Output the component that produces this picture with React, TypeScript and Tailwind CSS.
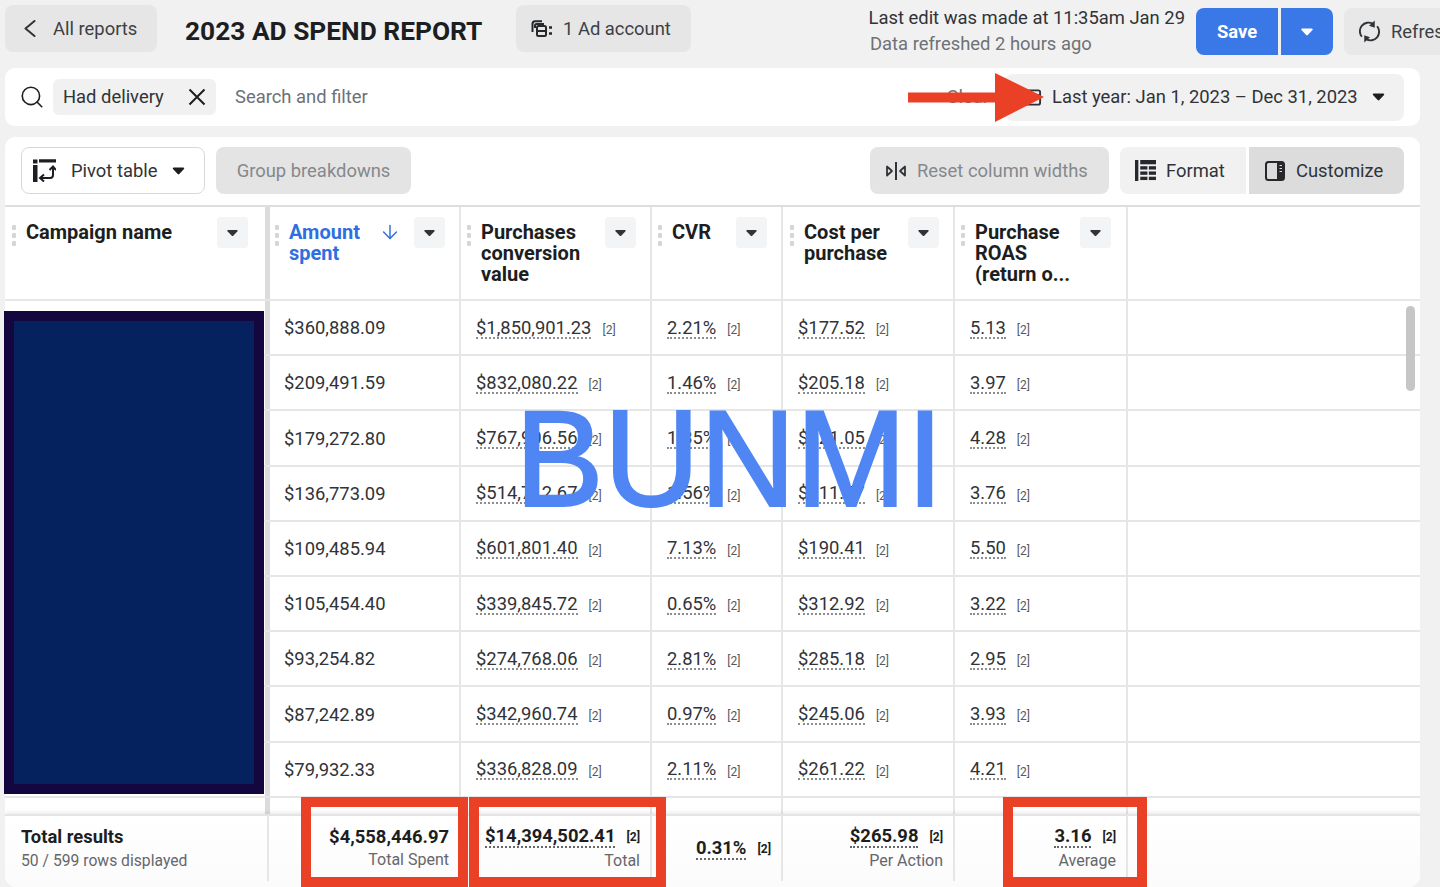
import React from "react";
import { Search, ArrowDown } from "lucide-react";

const cols = "grid grid-cols-[265px_191px_191px_131px_172px_173px_1fr]";

const rows = [
  ["$360,888.09", "$1,850,901.23", "2.21%", "$177.52", "5.13"],
  ["$209,491.59", "$832,080.22", "1.46%", "$205.18", "3.97"],
  ["$179,272.80", "$767,906.56", "1.35%", "$221.05", "4.28"],
  ["$136,773.09", "$514,712.67", "1.56%", "$211.77", "3.76"],
  ["$109,485.94", "$601,801.40", "7.13%", "$190.41", "5.50"],
  ["$105,454.40", "$339,845.72", "0.65%", "$312.92", "3.22"],
  ["$93,254.82", "$274,768.06", "2.81%", "$285.18", "2.95"],
  ["$87,242.89", "$342,960.74", "0.97%", "$245.06", "3.93"],
  ["$79,932.33", "$336,828.09", "2.11%", "$261.22", "4.21"],
];

function Caret({ className = "" }: { className?: string }) {
  return (
    <svg viewBox="0 0 12 8" className={className} fill="currentColor">
      <path d="M1.2 0.6h9.6c.8 0 1.2.9.7 1.5L6.8 7c-.4.5-1.2.5-1.6 0L.5 2.1C0 1.5.4.6 1.2.6z" />
    </svg>
  );
}

function Dots() {
  return (
    <div className="flex flex-col gap-[3px] pt-[3px] w-[4px] shrink-0">
      <span className="w-[4px] h-[5px] rounded-[1px] bg-[#d4d6d9]" />
      <span className="w-[4px] h-[5px] rounded-[1px] bg-[#d4d6d9]" />
      <span className="w-[4px] h-[5px] rounded-[1px] bg-[#d4d6d9]" />
    </div>
  );
}

function HeaderCell({
  lines,
  blue,
  menuAt,
  pad,
  thick,
}: {
  lines: string[];
  blue?: boolean;
  menuAt: string;
  pad: string;
  thick?: boolean;
}) {
  return (
    <div
      className={`relative flex h-full pt-[15px] ${pad} ${thick ? "border-r-[5px] border-r-[#dcdcdc]" : "border-r-2 border-r-[#e6e6e6]"}`}
    >
      <Dots />
      <div
        className={`ml-[10px] text-[20px] leading-[21px] font-bold ${blue ? "text-[#2f6fe0]" : "text-[#1c1e21]"}`}
      >
        {lines.map((l) => (
          <div key={l} className="whitespace-nowrap">
            {l}
          </div>
        ))}
      </div>
      {blue && <ArrowDown className="absolute left-[109px] top-[14px] w-[22px] h-[22px] text-[#2f6fe0]" strokeWidth={1.6} />}
      <div className={`absolute top-[10px] ${menuAt} w-[31px] h-[31px] rounded-[4px] bg-[#f3f4f5] flex items-center justify-center`}>
        <Caret className="w-[11px] h-[8px] text-[#303338]" />
      </div>
    </div>
  );
}

function Val({ v }: { v: string }) {
  return (
    <div className="flex items-center pl-[15px] pt-[1px] h-full border-r-2 border-r-[#e6e6e6]">
      <span className="text-[18.4px] leading-[19px] text-[#303338] border-b-2 border-dotted border-[#8a8d91]">{v}</span>
      <span className="ml-[11px] text-[12px] text-[#55585d] mt-[4px]">[2]</span>
    </div>
  );
}

function FootVal({ v, sub, center }: { v: string; sub?: string; center?: boolean }) {
  return (
    <div className={`flex flex-col items-end pr-[10px] ${center ? "justify-center" : "pt-[10px]"} h-[65px] border-r-2 border-r-[#e6e6e6]`}>
      <div className="flex items-center">
        <span className="text-[18.4px] leading-[20px] font-bold text-[#1c1e21] border-b-2 border-dotted border-[#65676b]">{v}</span>
        <span className="ml-[11px] text-[12px] font-bold text-[#1c1e21]">[2]</span>
      </div>
      {sub && <div className="text-[16px] leading-[20px] mt-[3px] text-[#65676b]">{sub}</div>}
    </div>
  );
}

export default function App() {
  return (
    <div className="relative w-[1440px] h-[887px] overflow-hidden bg-[#f1f1f1] font-['Roboto',sans-serif] text-[#1c1e21]">
      {/* Top bar */}
      <div className="h-[68px] flex items-start pl-[5px]">
        <div className="mt-[5px] w-[152px] h-[47px] rounded-[8px] bg-[#e6e6e6] flex items-center pl-[19px] text-[18.4px] text-[#3c3f44]">
          <svg viewBox="0 0 12 17" className="w-[12px] h-[17px]" fill="none" stroke="#303338" strokeWidth="2" strokeLinecap="round" strokeLinejoin="round">
            <path d="M10.5 1 1.5 8.5l9 7.5" />
          </svg>
          <span className="ml-[17px]">All reports</span>
        </div>
        <div className="ml-[28px] mt-[14px] text-[26.3px] leading-[34px] font-bold whitespace-nowrap w-[331px]">2023 AD SPEND REPORT</div>
        <div className="mt-[5px] w-[175px] h-[47px] rounded-[8px] bg-[#e6e6e6] flex items-center pl-[15px] text-[18.4px] text-[#3c3f44]">
          <svg viewBox="0 0 22 17" className="w-[22px] h-[17px]" fill="none" stroke="#26282c" strokeWidth="2">
            <path d="M1.5 12V4C1.5 2.4 2.6 1.3 4 1.3h7" />
            <path d="M4 8V5.5C4 4.7 4.7 4 5.5 4H13" />
            <rect x="6" y="6" width="9" height="10" rx="1.5" />
            <path d="M6 11h9" />
            <path d="M18 7.5h3M18 13.5h3" strokeWidth="2.4" />
          </svg>
          <span className="ml-[10px]">1 Ad account</span>
        </div>
        <div className="ml-auto mt-[5px] w-[320px] mr-[11px]">
          <div className="text-[18.4px] leading-[26px] text-[#303338] whitespace-nowrap text-right">Last edit was made at 11:35am Jan 29</div>
          <div className="text-[18.4px] leading-[26px] text-[#6e7176] pl-[5px] whitespace-nowrap">Data refreshed 2 hours ago</div>
        </div>
        <div className="mt-[8px] w-[82px] h-[47px] rounded-l-[8px] bg-[#3b78e7] flex items-center justify-center text-[18.4px] font-bold text-white">Save</div>
        <div className="mt-[8px] ml-[3px] w-[52px] h-[47px] rounded-r-[8px] bg-[#3b78e7] flex items-center justify-center">
          <Caret className="w-[12px] h-[8px] text-white" />
        </div>
        <div className="mt-[8px] ml-[11px] w-[96px] h-[47px] shrink-0 rounded-l-[8px] bg-[#e8e8e8] flex items-center pl-[15px] text-[18.4px] text-[#3c3f44]">
          <svg viewBox="0 0 22 24" className="w-[21px] h-[23px] shrink-0" fill="none" stroke="#303338" strokeWidth="2">
            <path d="M3 17.5A9 9 0 0 1 14.5 4" />
            <path d="M19 6.5A9 9 0 0 1 7.5 20" />
            <path d="M16.5 0.5v7.5l-6-2z" fill="#303338" stroke="none" />
            <path d="M5.5 23.5v-7.5l6 2z" fill="#303338" stroke="none" />
          </svg>
          <span className="ml-[11px] whitespace-nowrap">Refresh</span>
        </div>
      </div>

      {/* Search and filter card */}
      <div className="ml-[5px] w-[1415px] h-[58px] rounded-[10px] bg-white flex items-center pl-[14px] pr-[16px]">
        <Search className="w-[26px] h-[26px] text-[#1c1e21]" strokeWidth={1.5} />
        <div className="ml-[8px] w-[163px] h-[36px] rounded-[6px] bg-[#f1f1f1] flex items-center pl-[10px] text-[18.4px] text-[#303338]">
          <span>Had delivery</span>
          <svg viewBox="0 0 18 18" className="ml-[24px] w-[18px] h-[18px]" fill="none" stroke="#1c1e21" strokeWidth="2">
            <path d="M1.5 1.5l15 15M16.5 1.5l-15 15" />
          </svg>
        </div>
        <div className="ml-[19px] text-[18.4px] text-[#6e7176]">Search and filter</div>
        <div className="ml-auto text-[18.4px] text-[#6e7176] mr-[16px]">Clear</div>
        <div className="w-[399px] h-[47px] rounded-[8px] bg-[#f1f1f1] flex items-center pl-[18px] text-[18.4px] text-[#303338]">
          <svg viewBox="0 0 20 20" className="w-[19px] h-[20px]" fill="none" stroke="#303338" strokeWidth="2">
            <rect x="2" y="3" width="16" height="15" rx="2" />
            <path d="M2 8h16" />
          </svg>
          <span className="ml-[10px] whitespace-nowrap">Last year: Jan 1, 2023 – Dec 31, 2023</span>
          <Caret className="ml-[14px] w-[13px] h-[8px] text-[#1c1e21]" />
        </div>
      </div>

      {/* Report card */}
      <div className="mt-[11px] ml-[5px] w-[1415px] h-[750px] rounded-t-[10px] rounded-b-[12px] bg-white overflow-hidden">
        <div className="h-[70px] flex items-start pt-[10px] pl-[16px] pr-[16px] border-b-2 border-b-[#dedede]">
          <div className="w-[184px] h-[47px] rounded-[8px] border border-[#d8d8d8] flex items-center pl-[11px] text-[18.4px] text-[#303338]">
            <svg viewBox="0 0 23 23" className="w-[23px] h-[23px]" fill="none" stroke="#1c1e21">
              <path d="M0 0.5h4.5v4H0zM0 6h4.5v17H0z" fill="#1c1e21" stroke="none" />
              <path d="M6 1.8h17" strokeWidth="3.2" />
              <path d="M8 19h9c2 0 3-1 3-3V9" strokeWidth="2" />
              <path d="M16.5 11 20 7.5l3 3.5M11 15.5 7 19l4 3.5" strokeWidth="2" />
            </svg>
            <span className="ml-[15px]">Pivot table</span>
            <Caret className="ml-[15px] w-[13px] h-[8px] text-[#1c1e21]" />
          </div>
          <div className="ml-[11px] w-[195px] h-[47px] rounded-[8px] bg-[#e4e4e4] flex items-center justify-center text-[18.4px] text-[#85888c]">Group breakdowns</div>
          <div className="ml-auto w-[239px] h-[47px] rounded-[8px] bg-[#e4e4e4] flex items-center pl-[15px] text-[18.4px] text-[#85888c]">
            <svg viewBox="0 0 22 20" className="w-[22px] h-[20px]" fill="none" stroke="#303338" strokeWidth="1.8">
              <path d="M11 1v18" strokeWidth="2" />
              <path d="M2 5.5v9l5-4.5zM20 5.5v9l-5-4.5z" strokeLinejoin="round" />
            </svg>
            <span className="ml-[10px] whitespace-nowrap">Reset column widths</span>
          </div>
          <div className="ml-[11px] w-[126px] h-[47px] rounded-l-[8px] bg-[#f1f1f1] flex items-center pl-[15px] text-[18.4px] text-[#303338]">
            <svg viewBox="0 0 22 22" className="w-[21px] h-[21px]" fill="#26282c">
              <rect x="0" y="0" width="3.5" height="22" />
              <rect x="5.5" y="0" width="16.5" height="4.5" />
              <rect x="5.5" y="6.5" width="7.5" height="3.5" />
              <rect x="14.5" y="6.5" width="7.5" height="3.5" />
              <rect x="5.5" y="12" width="7.5" height="3.5" />
              <rect x="14.5" y="12" width="7.5" height="3.5" />
              <rect x="5.5" y="17.5" width="7.5" height="3.5" />
              <rect x="14.5" y="17.5" width="7.5" height="3.5" />
            </svg>
            <span className="ml-[10px]">Format</span>
          </div>
          <div className="ml-[3px] w-[155px] h-[47px] rounded-r-[8px] bg-[#dcdcdc] flex items-center pl-[16px] text-[18.4px] text-[#303338]">
            <svg viewBox="0 0 20 20" className="w-[20px] h-[20px]">
              <rect x="1" y="1" width="18" height="18" rx="2.5" fill="none" stroke="#26282c" strokeWidth="2" />
              <path d="M12 1h5a2 2 0 0 1 2 2v14a2 2 0 0 1-2 2h-5z" fill="#26282c" />
              <path d="M14.5 4.5h2.5M14.5 7.5h2.5M14.5 10.5h2.5" stroke="#dcdcdc" strokeWidth="1.2" />
            </svg>
            <span className="ml-[11px]">Customize</span>
          </div>
        </div>

        {/* Table header */}
        <div className={`${cols} h-[94px] border-b-2 border-b-[#e6e6e6]`}>
          <HeaderCell lines={["Campaign name"]} pad="pl-[7px]" menuAt="left-[212px]" thick />
          <HeaderCell lines={["Amount", "spent"]} pad="pl-[5px]" menuAt="left-[144px]" blue />
          <HeaderCell lines={["Purchases", "conversion", "value"]} pad="pl-[6px]" menuAt="left-[144px]" />
          <HeaderCell lines={["CVR"]} pad="pl-[6px]" menuAt="left-[84px]" />
          <HeaderCell lines={["Cost per", "purchase"]} pad="pl-[7px]" menuAt="left-[125px]" />
          <HeaderCell lines={["Purchase", "ROAS", "(return o..."]} pad="pl-[6px]" menuAt="left-[125px]" />
        </div>

        {/* Rows */}
        <div className="relative h-[513px] overflow-hidden">
          {rows.map((r) => (
            <div key={r[0]} className={`${cols} h-[55.2px] border-b-2 border-b-[#e6e6e6]`}>
              <div className="h-full border-r-[5px] border-r-[#dcdcdc]" />
              <div className="flex items-center pl-[14px] pt-[1px] text-[18.4px] text-[#303338] border-r-2 border-r-[#e6e6e6]">{r[0]}</div>
              <Val v={r[1]} />
              <Val v={r[2]} />
              <Val v={r[3]} />
              <Val v={r[4]} />
            </div>
          ))}
          <div className={`${cols} h-[20px]`}>
            <div className="h-full border-r-[5px] border-r-[#dcdcdc]" />
            <div className="border-r-2 border-r-[#e6e6e6]" />
            <div className="border-r-2 border-r-[#e6e6e6]" />
            <div className="border-r-2 border-r-[#e6e6e6]" />
            <div className="border-r-2 border-r-[#e6e6e6]" />
            <div className="border-r-2 border-r-[#e6e6e6]" />
          </div>
          <div className="absolute right-[5px] top-[5px] w-[9px] h-[85px] rounded-full bg-[#c6c6c6]" />
        </div>

        {/* Footer */}
        <div className={`${cols} h-[73px] border-t-2 border-t-[#e4e4e4] shadow-[0_-2px_4px_rgba(0,0,0,0.08)] relative bg-gradient-to-b from-white to-[#fbfbfb]`}>
          <div className="h-[65px] pl-[16px] pt-[10px] mr-[1px] border-r-2 border-r-[#e6e6e6]">
            <div className="text-[18.4px] leading-[22px] font-bold">Total results</div>
            <div className="text-[15.7px] leading-[20px] mt-[3px] text-[#65676b] whitespace-nowrap">50 / 599 rows displayed</div>
          </div>
          <div className="h-[65px] flex flex-col items-end pr-[10px] pt-[10px] border-r-2 border-r-[#e6e6e6]">
            <span className="text-[18.4px] leading-[22px] font-bold">$4,558,446.97</span>
            <span className="text-[16px] leading-[20px] mt-[2px] text-[#65676b]">Total Spent</span>
          </div>
          <FootVal v="$14,394,502.41" sub="Total" />
          <FootVal v="0.31%" center />
          <FootVal v="$265.98" sub="Per Action" />
          <FootVal v="3.16" sub="Average" />
        </div>
      </div>

      {/* Annotations laid over the screenshot */}
      <div className="absolute left-[4px] top-[311px] w-[260px] h-[483px] border-[10px] border-[#14063f] bg-[#05215e]" />
      <div className="absolute left-[301px] top-[797px] w-[167px] h-[90px] border-[10px] border-[#ea4025]" />
      <div className="absolute left-[469px] top-[797px] w-[197px] h-[90px] border-[10px] border-[#ea4025]" />
      <div className="absolute left-[1003px] top-[797px] w-[144px] h-[90px] border-[10px] border-[#ea4025]" />
      <svg className="absolute left-[908px] top-[73px] w-[137px] h-[49px]" viewBox="0 0 137 49">
        <path d="M0 19.5h87V0l49 24-49 25V29.5H0z" fill="#ea4025" />
      </svg>
      <div className="absolute left-[515px] top-[383px] font-['Liberation_Sans',sans-serif] text-[133px] leading-[152px] scale-y-[1.03] [-webkit-text-stroke:2px_#4f86f3] text-[#4f86f3] whitespace-nowrap">BUNMI</div>
    </div>
  );
}
